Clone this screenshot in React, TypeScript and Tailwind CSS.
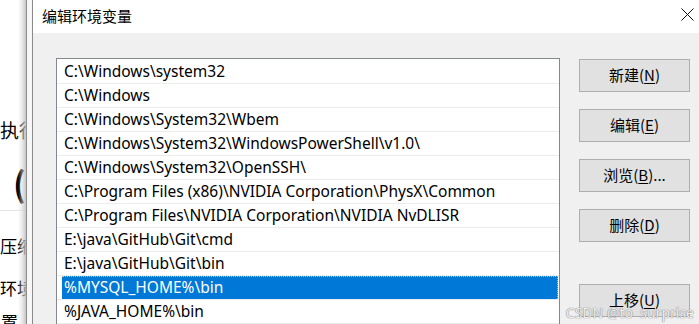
import React from "react";

const paths = [
  "C:\\Windows\\system32",
  "C:\\Windows",
  "C:\\Windows\\System32\\Wbem",
  "C:\\Windows\\System32\\WindowsPowerShell\\v1.0\\",
  "C:\\Windows\\System32\\OpenSSH\\",
  "C:\\Program Files (x86)\\NVIDIA Corporation\\PhysX\\Common",
  "C:\\Program Files\\NVIDIA Corporation\\NVIDIA NvDLISR",
  "E:\\java\\GitHub\\Git\\cmd",
  "E:\\java\\GitHub\\Git\\bin",
  "%MYSQL_HOME%\\bin",
  "%JAVA_HOME%\\bin",
];

const SELECTED = 9;

function DlgButton({ label, hotkey, suffix = "", className = "" }: { label: string; hotkey: string; suffix?: string; className?: string }) {
  return (
    <button className={`w-[111px] h-[33px] bg-[#e1e1e1] border border-[#adadad] text-[15px] text-black flex items-center justify-center ${className}`}>
      {label}(<span className="underline underline-offset-2">{hotkey}</span>){suffix}
    </button>
  );
}

export default function App() {
  return (
    <div className="w-[699px] h-[324px] relative flex overflow-hidden bg-white font-['Noto_Sans','Noto_Sans_CJK_SC',sans-serif] text-black">
      {/* page behind the dialog */}
      <div className="w-[32px] shrink-0 flex">
        <div className="w-[18px] shrink-0 whitespace-nowrap flex flex-col font-['Noto_Sans_CJK_SC',sans-serif]">
          <div className="mt-[118px] text-[19px] leading-[24px]">执行</div>
          <div className="mt-[22px] pl-[13px] text-[34px] leading-[38px] font-bold">(</div>
          <div className="mt-[8px] border-t border-[#e6e6e6] w-[26px]" />
          <div className="mt-[24px] text-[17px] leading-[22px]">压缩</div>
          <div className="mt-[20px] text-[17px] leading-[22px]">环境</div>
          <div className="mt-[12px] pl-[1px] text-[17px] leading-[22px]">置</div>
        </div>
        <div className="w-[8px] shrink-0 z-10 bg-gradient-to-r from-white/0 via-[#d6d6d6]/50 to-[#bdbdbd]/85" />
        <div className="w-[1px] shrink-0 z-10 bg-[#8e8e8e]" />
        <div className="w-[5px] shrink-0 z-10 bg-[#f7f7f7]" />
      </div>

      {/* dialog */}
      <div className="flex-1 flex flex-col border-l border-[#8a8a8a] z-10 bg-white">
        <div className="h-[33px] shrink-0 flex items-center justify-between pl-[9px] pr-[5px] bg-white">
          <span className="text-[15px] leading-none font-['Noto_Sans_CJK_SC',sans-serif] mt-[-2px]">编辑环境变量</span>
          <svg width="13" height="13" viewBox="0 0 13 13" className="mt-[-4px]">
            <path d="M0.5 0.5 L12.5 12.5 M12.5 0.5 L0.5 12.5" stroke="#111" strokeWidth="1" fill="none" />
          </svg>
        </div>
        <div className="flex-1 bg-[#f0f0f0] flex items-start pl-[23px] gap-[19px]">
          <div className="w-[504px] h-[300px] mt-[25px] bg-white border border-b-0 border-[#828790] pt-[1px] flex flex-col">
            {paths.map((p, i) => (
              <div key={p} className="h-[24px] shrink-0 border-b border-[#ececec] flex">
                <div
                  className={
                    i === SELECTED
                      ? "flex-1 ml-[5px] mr-[1px] bg-[#0078d7] text-white border-t border-r border-dotted border-[#f3b27a] flex items-center pl-[2px]"
                      : "flex-1 ml-[5px] mr-[1px] flex items-center pl-[2px]"
                  }
                >
                  <span className="text-[15.5px] leading-none whitespace-nowrap">{p}</span>
                </div>
              </div>
            ))}
          </div>
          <div className="w-[111px] shrink-0 mt-[26px] flex flex-col gap-[17px] font-['Noto_Sans_CJK_SC',sans-serif]">
            <DlgButton label="新建" hotkey="N" />
            <DlgButton label="编辑" hotkey="E" />
            <DlgButton label="浏览" hotkey="B" suffix="..." />
            <DlgButton label="删除" hotkey="D" />
            <DlgButton label="上移" hotkey="U" className="mt-[25px]" />
          </div>
        </div>
      </div>

      {/* watermark */}
      <div className="absolute right-[5px] bottom-[4px] z-20 text-[14px] leading-none text-white/90 [text-shadow:0_0_1px_#777,0_0_1px_#777] font-['Noto_Sans',sans-serif]">
        CSDN @to&nbsp;&nbsp;surprise
      </div>
    </div>
  );
}
